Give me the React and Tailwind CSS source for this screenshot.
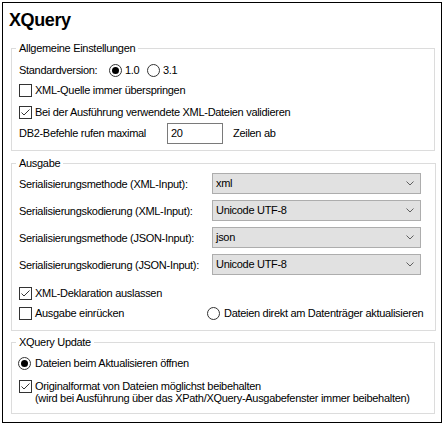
import React from "react";

const font = { fontFamily: '"Liberation Sans", Arial, sans-serif' };

function Check({ checked }) {
  return (
    <span className="relative inline-block w-[13px] h-[13px] shrink-0 border border-[#333333] bg-white">
      {checked && (
        <svg className="absolute left-0 top-0" width="11" height="11" viewBox="0 0 11 11">
          <polyline points="1.5,5.5 4,8 9.5,2.5" fill="none" stroke="#333333" strokeWidth="1" />
        </svg>
      )}
    </span>
  );
}

function Radio({ checked }) {
  return (
    <span className="inline-flex items-center justify-center w-[13px] h-[13px] shrink-0 rounded-full border border-[#333333] bg-white">
      {checked && <span className="block w-[7px] h-[7px] rounded-full bg-black" />}
    </span>
  );
}

function Select({ value }) {
  return (
    <div className="flex items-center justify-between w-[209px] h-[21px] bg-[#e1e1e1] border border-[#adadad] pl-[3px] pr-[6px]">
      <span>{value}</span>
      <svg width="8" height="5" viewBox="0 0 8 5">
        <polyline points="0.5,0.5 4,4 7.5,0.5" fill="none" stroke="#606060" strokeWidth="1" />
      </svg>
    </div>
  );
}

function Group({ title, className, children }) {
  return (
    <fieldset className={"ml-[8px] w-[424px] border border-[#dcdcdc] pl-[7px] pr-[12px] " + className}>
      <legend className="-ml-[3px] px-[3px] leading-[14px]">{title}</legend>
      {children}
    </fieldset>
  );
}

export default function App() {
  return (
    <div className="w-[445px] h-[425px] bg-white pt-[2px] pl-[2px] text-[11px] tracking-[-0.3px] text-black whitespace-nowrap" style={font}>
      <div className="w-[440px] h-[421px] border border-black">
        <div className="pl-[6px] mt-[7px] h-[20px] leading-[20px] text-[18px] font-bold tracking-[-0.4px]">XQuery</div>

        <Group title="Allgemeine Einstellungen" className="mt-[11px] pb-[6px]">
          <div className="mt-[5px] h-[20px] flex items-center">
            <span className="w-[90px]">Standardversion:</span>
            <Radio checked />
            <span className="ml-[3px] w-[22px]">1.0</span>
            <Radio />
            <span className="ml-[3px]">3.1</span>
          </div>
          <div className="h-[20px] flex items-center gap-[3px]">
            <Check />
            <span>XML-Quelle immer überspringen</span>
          </div>
          <div className="mt-[2px] h-[20px] flex items-center gap-[3px]">
            <Check checked />
            <span>Bei der Ausführung verwendete XML-Dateien validieren</span>
          </div>
          <div className="mt-[1px] h-[21px] flex items-center">
            <span className="w-[148px]">DB2-Befehle rufen maximal</span>
            <div className="w-[56px] h-[21px] border border-[#7a7a7a] bg-white pl-[3px] flex items-center">20</div>
            <span className="ml-[10px]">Zeilen ab</span>
          </div>
        </Group>

        <Group title="Ausgabe" className="mt-[5px] pb-[7px]">
          <div className="mt-[3px] flex flex-col gap-[6px]">
            {[
              ["Serialisierungsmethode (XML-Input):", "xml"],
              ["Serialisierungskodierung (XML-Input):", "Unicode UTF-8"],
              ["Serialisierungsmethode (JSON-Input):", "json"],
              ["Serialisierungskodierung (JSON-Input):", "Unicode UTF-8"],
            ].map(([l, v]) => (
              <div key={l} className="flex items-center h-[21px]">
                <span className="w-[193px] pt-[2px]">{l}</span>
                <Select value={v} />
              </div>
            ))}
          </div>
          <div className="mt-[8px] h-[20px] flex items-center gap-[3px]">
            <Check checked />
            <span>XML-Deklaration auslassen</span>
          </div>
          <div className="h-[20px] flex items-center">
            <Check />
            <span className="ml-[3px] w-[172px]">Ausgabe einrücken</span>
            <Radio />
            <span className="ml-[4px]">Dateien direkt am Datenträger aktualisieren</span>
          </div>
        </Group>

        <Group title="XQuery Update" className="mt-[4px] pb-[9px]">
          <div className="mt-[4px] h-[20px] flex items-center gap-[4px] -ml-[1px]">
            <Radio checked />
            <span>Dateien beim Aktualisieren öffnen</span>
          </div>
          <div className="mt-[7px] flex items-start gap-[3px]">
            <Check checked />
            <div className="leading-[12px]">
              <div>Originalformat von Dateien möglichst beibehalten</div>
              <div>(wird bei Ausführung über das XPath/XQuery-Ausgabefenster immer beibehalten)</div>
            </div>
          </div>
        </Group>
      </div>
    </div>
  );
}
